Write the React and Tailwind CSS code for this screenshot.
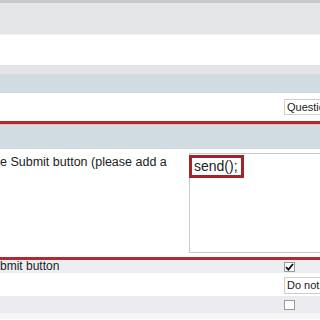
import React from 'react';

const font = { fontFamily: '"Liberation Sans", Arial, sans-serif' };

const Check = ({ checked }) => (
  <div className="w-[11px] h-[10px] border border-[#9a9a9a] bg-white flex items-center justify-center">
    {checked && (
      <svg width="9" height="8" viewBox="0 0 9 8">
        <path d="M1 4.2 L3.4 6.6 L8 1" stroke="#111" strokeWidth="1.8" fill="none" />
      </svg>
    )}
  </div>
);

const App = () => {
  return (
    <div className="w-[320px] h-[320px] overflow-hidden bg-white text-[#222]" style={font}>
      <div className="h-[3px] bg-[#c9cacc]" />
      <div className="h-[32px] bg-[#e5e6e8] border-b border-[#f0f1f2]" />
      <div className="h-[30px] bg-white" />
      <div className="h-[9px] bg-[#e4e4e6]" />
      <div className="h-[19px] bg-[#d0dbe2]" />
      <div className="h-[28px] bg-white flex pl-[284px] pt-[6px]">
        <div className="h-[16px] w-[60px] shrink-0 border border-[#cfcfcf] bg-white pl-[2px] text-[11px] leading-[14px] whitespace-nowrap">
          Question
        </div>
      </div>
      <div className="h-[3px] bg-[#b22a30]" />
      <div className="h-[1px] bg-[#e9b7b9]" />
      <div className="h-[24px] bg-[#d0dbe2]" />
      <div className="h-[108px] bg-white flex">
        <div className="w-[189px] shrink-0 pt-[6px] text-[12.5px] leading-[15px] whitespace-nowrap">
          e Submit button (please add a
        </div>
        <div className="relative mt-[4px] h-[100px] w-[160px] shrink-0 border border-[#c8c8c8] bg-white">
          <div className="absolute left-[-1px] top-[1px] w-[55px] h-[23px] border-[3px] border-[#a3232b] pl-[2px] text-[14px] leading-[16px]">
            send();
          </div>
        </div>
      </div>
      <div className="h-[3px] bg-[#b22a30]" />
      <div className="h-[13px] bg-[#eceef2] flex items-center">
        <div className="w-[284px] shrink-0 text-[12px] leading-[13px] whitespace-nowrap">bmit button</div>
        <Check checked />
      </div>
      <div className="h-[23px] bg-white flex pl-[284px] pt-[4px]">
        <div className="h-[17px] w-[60px] shrink-0 border border-[#cfcfcf] bg-white pl-[2px] text-[11px] leading-[15px] whitespace-nowrap">
          Do not
        </div>
      </div>
      <div className="h-[17px] bg-[#eaecef] flex items-center pl-[284px]">
        <Check />
      </div>
      <div className="h-[6px] bg-[#f5f5f6]" />
    </div>
  );
};

export default App;
